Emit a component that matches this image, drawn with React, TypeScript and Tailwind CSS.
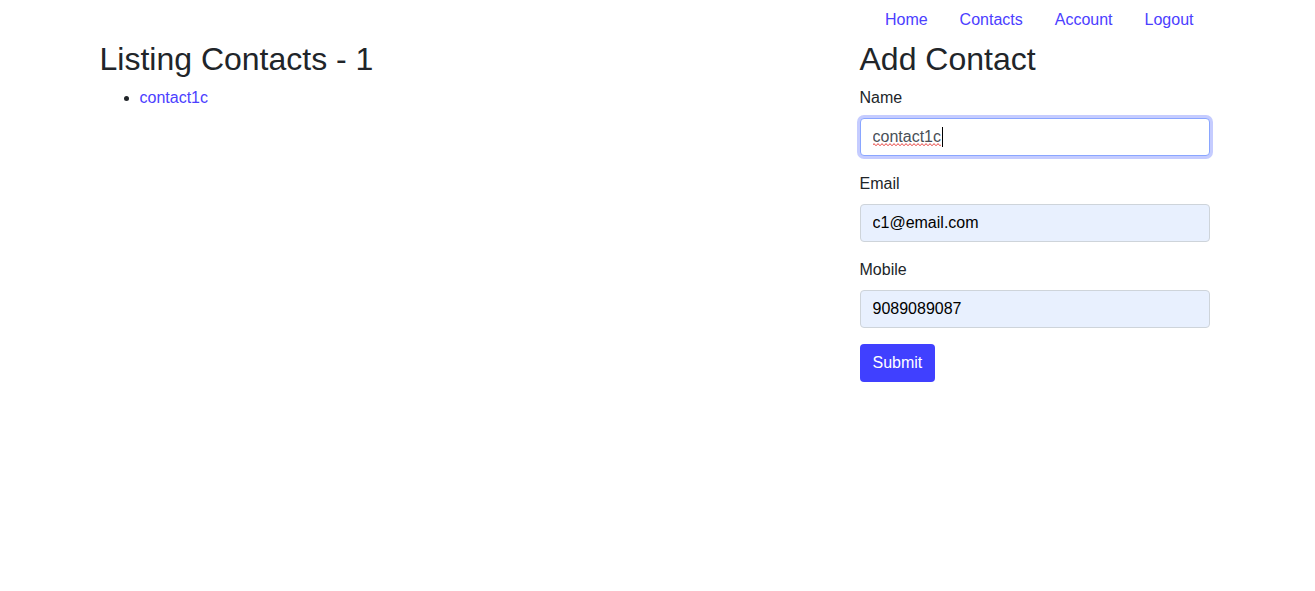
import React from "react";

const links = ["Home", "Contacts", "Account", "Logout"];

// spell-check squiggle under the focused field's text
const Squiggle = ({ width }: { width: number }) => {
  let d = "M0 2";
  for (let x = 0; x < width; x += 2) d += ` L${x + 1} ${x % 4 === 0 ? 0.5 : 2.5} L${x + 2} 2`;
  return (
    <svg width={width} height="3" className="absolute left-[13px] top-[25px]">
      <path d={d} fill="none" stroke="#e53935" strokeWidth="0.8" />
    </svg>
  );
};

const Field = ({
  label,
  value,
  focused = false,
  autofill = false,
}: {
  label: string;
  value: string;
  focused?: boolean;
  autofill?: boolean;
}) => (
  <div className="mb-4">
    <label className="block mb-2 leading-6">{label}</label>
    <div className="relative w-[350px]">
      <input
        readOnly
        value={value}
        className={`block w-[350px] h-[38px] px-3 py-1.5 rounded border text-base leading-6 outline-none ${
          focused
            ? "bg-white text-[#495057] border-[#8aa6ff] shadow-[0_0_0_3px_rgba(90,110,255,0.35)]"
            : ""
        } ${autofill ? "bg-[#e8f0fe] border-[#ced4da] text-black" : ""}`}
      />
      {focused && (
        <>
          <Squiggle width={68} />
          <span className="absolute left-[82px] top-[9px] w-px h-[20px] bg-black" />
        </>
      )}
    </div>
  </div>
);

export default function App() {
  return (
    <div className="min-h-[591px] bg-white text-[#212529] text-base font-['Liberation_Sans',Arial,sans-serif]">
      <div className="w-[1140px] mx-auto px-3">
        <nav className="flex justify-end pr-[6px]">
          {links.map((l) => (
            <a key={l} href="#" className="px-4 py-2 leading-6 text-[#4b40ff]">
              {l}
            </a>
          ))}
        </nav>
        <div className="flex">
          <div className="w-[760px]">
            <h2 className="text-[32px] leading-[38.4px] font-normal mb-2">
              Listing Contacts - 1
            </h2>
            <ul className="list-disc pl-10 leading-6">
              <li>
                <a href="#" className="text-[#4b40ff]">
                  contact1c
                </a>
              </li>
            </ul>
          </div>
          <div className="flex-1">
            <h2 className="text-[32px] leading-[38.4px] font-normal mb-2">
              Add Contact
            </h2>
            <form onSubmit={(e) => e.preventDefault()}>
              <Field label="Name" value="contact1c" focused />
              <Field label="Email" value="c1@email.com" autofill />
              <Field label="Mobile" value="9089089087" autofill />
              <button
                type="submit"
                className="h-[38px] px-[13px] rounded bg-[#4040ff] text-white leading-6"
              >
                Submit
              </button>
            </form>
          </div>
        </div>
      </div>
    </div>
  );
}
